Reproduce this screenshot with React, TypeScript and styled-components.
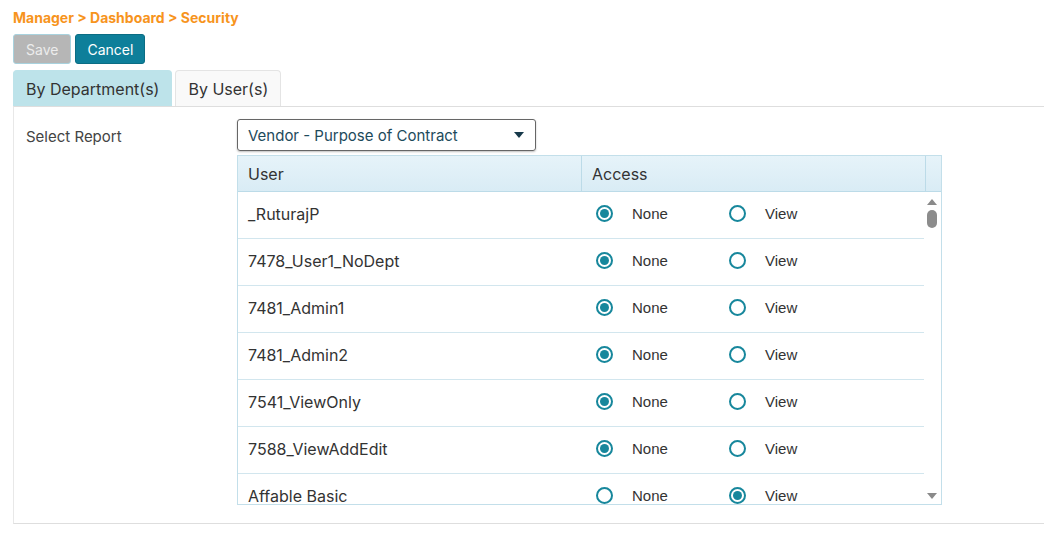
import React from "react";
import styled, { createGlobalStyle } from "styled-components";

const Global = createGlobalStyle`
  html, body { margin: 0; padding: 0; background: #fff; overflow: hidden; }
  body { font-family: Inter, "Liberation Sans", sans-serif; color: #333; }
  * { box-sizing: border-box; }
`;

const Page = styled.div`
  padding: 10px 0 0 13px;
  width: 1060px;
`;

const Breadcrumb = styled.div`
  font-size: 14px;
  font-weight: 700;
  line-height: 16px;
  color: #f7941d;
`;

const Toolbar = styled.div`
  display: flex;
  gap: 4px;
  margin-top: 8px;
`;

const Button = styled.button<{ $primary?: boolean }>`
  height: 30px;
  padding: 0 ${(p) => (p.$primary ? 11 : 12)}px;
  font-family: Inter, "Liberation Sans", sans-serif;
  font-size: 14px;
  border-radius: 3px;
  border: 1px solid ${(p) => (p.$primary ? "#0b6d84" : "#a8d2de")};
  background: ${(p) => (p.$primary ? "#0e7f9a" : "#b6b6b6")};
  color: ${(p) => (p.$primary ? "#fff" : "#ececec")};
`;

const Tabs = styled.div`
  display: flex;
  gap: 3px;
  margin-top: 6px;
  height: 36px;
`;

const Tab = styled.div<{ $active?: boolean }>`
  display: flex;
  align-items: center;
  padding: 0 12px;
  font-size: 16px;
  color: #333;
  border-radius: 4px 4px 0 0;
  background: ${(p) => (p.$active ? "#bde3ea" : "#f9f9f9")};
  border: 1px solid ${(p) => (p.$active ? "#bde3ea" : "#e4e4e4")};
  border-bottom: none;
`;

const Panel = styled.div`
  border: 1px solid #dedede;
  border-left-color: #e8e8e8;
  border-right: none;
  padding: 12px 0 17px 12px;
  display: flex;
  height: 418px;
`;

const Label = styled.div`
  width: 211px;
  font-size: 15px;
  color: #444;
  padding-top: 8px;
`;

const Content = styled.div`
  display: flex;
  flex-direction: column;
  gap: 4px;
`;

const Select = styled.div`
  width: 299px;
  height: 32px;
  border: 1px solid #666;
  border-radius: 3px;
  box-shadow: 0 1px 2px rgba(0, 0, 0, 0.25);
  display: flex;
  align-items: center;
  justify-content: space-between;
  padding: 0 11px 0 10px;
  font-size: 15px;
  color: #1d4a5b;
`;

const Caret = styled.span`
  width: 0;
  height: 0;
  border-left: 5px solid transparent;
  border-right: 5px solid transparent;
  border-top: 6px solid #17394a;
`;

const Grid = styled.div`
  width: 705px;
  height: 350px;
  border: 1px solid #c3dfea;
  display: flex;
  flex-direction: column;
`;

const HeaderRow = styled.div`
  display: flex;
  height: 36px;
  flex-shrink: 0;
  background: linear-gradient(#e6f3f9, #d9ecf5);
  border-bottom: 1px solid #bcdbe8;
`;

const HeaderCell = styled.div<{ $w: number }>`
  width: ${(p) => p.$w}px;
  flex-shrink: 0;
  display: flex;
  align-items: center;
  padding-left: 10px;
  font-size: 16px;
  color: #333;
  border-right: 1px solid #bcdbe8;
  &:last-child { border-right: none; }
`;

const Body = styled.div`
  flex: 1;
  display: flex;
  min-height: 0;
`;

const Rows = styled.div`
  width: 687px;
  overflow: hidden;
`;

const Row = styled.div`
  display: flex;
  height: 47px;
  flex-shrink: 0;
  border-bottom: 1px solid #d2e6ee;
`;

const UserCell = styled.div`
  width: 344px;
  display: flex;
  align-items: center;
  padding: 0 0 2px 10px;
  font-size: 16px;
  color: #333;
`;

const AccessCell = styled.div`
  display: flex;
  align-items: center;
  padding: 0 0 4px 14px;
`;

const Option = styled.label`
  width: 133px;
  display: flex;
  align-items: center;
  gap: 19px;
  font-family: "Liberation Sans", Arial, sans-serif;
  font-size: 15px;
  color: #333;
`;

const Radio = styled.span<{ $on?: boolean }>`
  width: 17px;
  height: 17px;
  border-radius: 50%;
  border: 2px solid #17879c;
  display: flex;
  align-items: center;
  justify-content: center;
  &::after {
    content: "";
    width: 9px;
    height: 9px;
    border-radius: 50%;
    background: ${(p) => (p.$on ? "#17879c" : "transparent")};
  }
`;

const Scrollbar = styled.div`
  width: 17px;
  display: flex;
  flex-direction: column;
  align-items: center;
  padding: 7px 0 5px;
`;

const Arrow = styled.span<{ $down?: boolean }>`
  width: 0;
  height: 0;
  border-left: 5px solid transparent;
  border-right: 5px solid transparent;
  ${(p) =>
    p.$down ? "border-top: 6px solid #8a8a8a;" : "border-bottom: 6px solid #8a8a8a;"}
  margin-left: -2px;
`;

const Thumb = styled.span`
  width: 10px;
  height: 18px;
  border-radius: 5px;
  background: #8c8c8c;
  margin-top: 5px;
  margin-left: -2px;
`;

const Spacer = styled.div`
  flex: 1;
`;

const users: { name: string; view: boolean }[] = [
  { name: "_RuturajP", view: false },
  { name: "7478_User1_NoDept", view: false },
  { name: "7481_Admin1", view: false },
  { name: "7481_Admin2", view: false },
  { name: "7541_ViewOnly", view: false },
  { name: "7588_ViewAddEdit", view: false },
  { name: "Affable Basic", view: true },
];

export default function App() {
  return (
    <>
      <Global />
      <Page>
        <Breadcrumb>Manager &gt; Dashboard &gt; Security</Breadcrumb>
        <Toolbar>
          <Button>Save</Button>
          <Button $primary>Cancel</Button>
        </Toolbar>
        <Tabs>
          <Tab $active>By Department(s)</Tab>
          <Tab>By User(s)</Tab>
        </Tabs>
        <Panel>
          <Label>Select Report</Label>
          <Content>
            <Select>
              <span>Vendor - Purpose of Contract</span>
              <Caret />
            </Select>
            <Grid>
              <HeaderRow>
                <HeaderCell $w={344}>User</HeaderCell>
                <HeaderCell $w={344}>Access</HeaderCell>
                <HeaderCell $w={15} />
              </HeaderRow>
              <Body>
                <Rows>
                  {users.map((u) => (
                    <Row key={u.name}>
                      <UserCell>{u.name}</UserCell>
                      <AccessCell>
                        <Option>
                          <Radio $on={!u.view} />
                          None
                        </Option>
                        <Option>
                          <Radio $on={u.view} />
                          View
                        </Option>
                      </AccessCell>
                    </Row>
                  ))}
                </Rows>
                <Scrollbar>
                  <Arrow />
                  <Thumb />
                  <Spacer />
                  <Arrow $down />
                </Scrollbar>
              </Body>
            </Grid>
          </Content>
        </Panel>
      </Page>
    </>
  );
}
